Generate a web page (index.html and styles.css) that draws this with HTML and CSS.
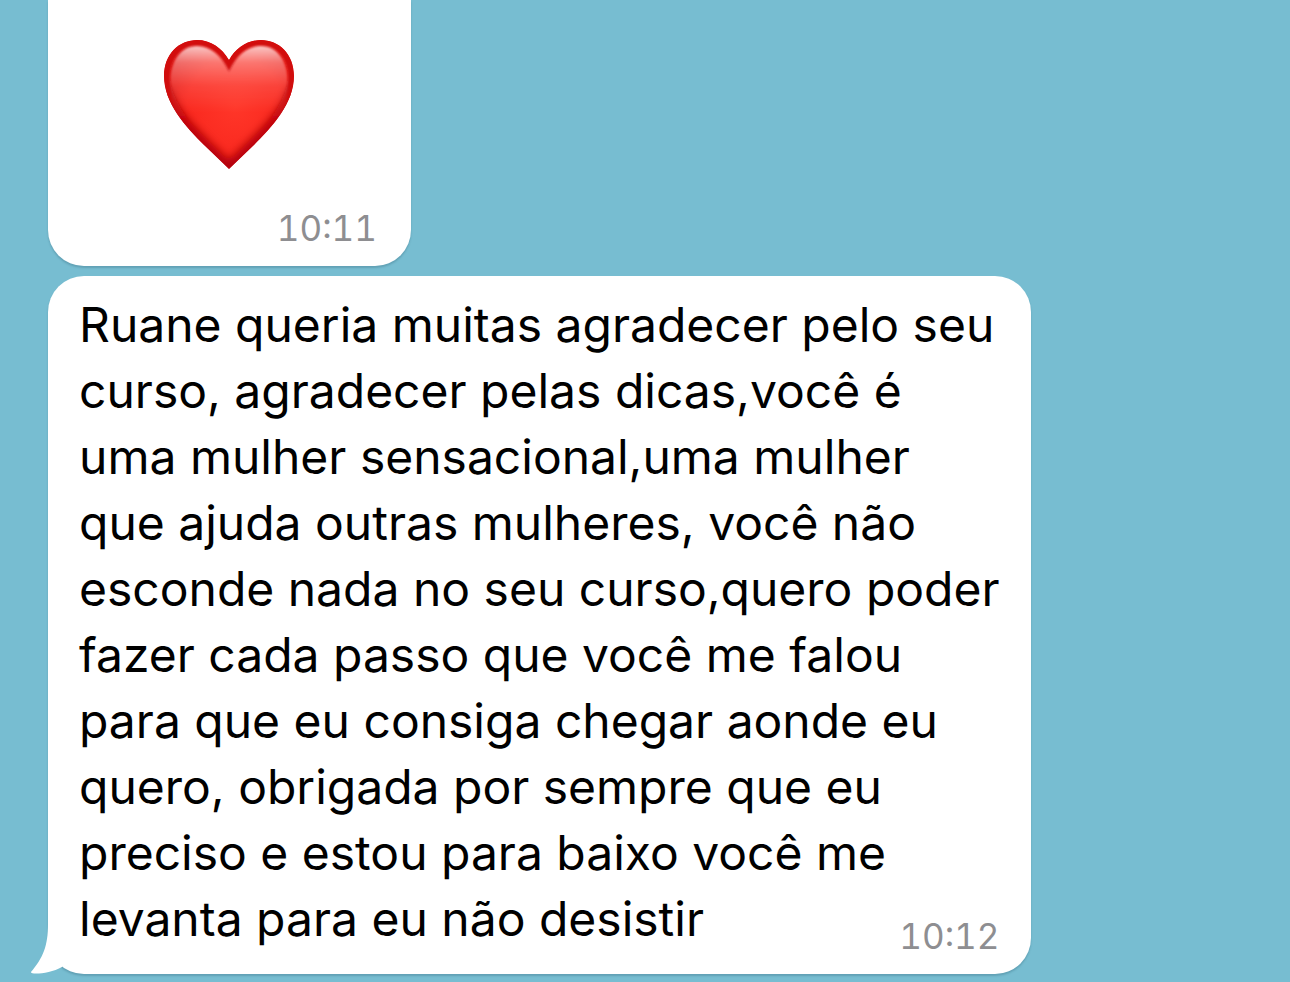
FILE: index.html
```
<!DOCTYPE html>
<html lang="pt-BR">
<head>
  <meta charset="UTF-8">
  <meta name="viewport" content="width=device-width, initial-scale=1.0">
  <title>Chat</title>
  <link rel="stylesheet" href="styles.css">
</head>
<body>
  <main class="chat">
    <article class="message message-emoji">
      <svg class="heart" viewBox="0 0 130 130" role="img" aria-label="Coração vermelho">
        <defs>
          <path id="heart-shape" d="M65 129L40 105C22 87 0 63 0 36C0 14 15 0 33 0C47 0 58 8 65 20C72 8 83 0 97 0C115 0 130 14 130 36C130 63 108 87 90 105Z"/>
          <clipPath id="heart-clip">
            <use href="#heart-shape"/>
          </clipPath>
          <radialGradient id="heart-fill" cx="55%" cy="52%" r="62%">
            <stop offset="0" stop-color="#ff3629"/>
            <stop offset="0.6" stop-color="#fa291f"/>
            <stop offset="1" stop-color="#e01512"/>
          </radialGradient>
          <linearGradient id="heart-shine" gradientUnits="userSpaceOnUse" x1="0" y1="6" x2="0" y2="72">
            <stop offset="0" stop-color="#fff" stop-opacity="0.75"/>
            <stop offset="0.25" stop-color="#fff" stop-opacity="0.36"/>
            <stop offset="0.6" stop-color="#fff" stop-opacity="0.12"/>
            <stop offset="1" stop-color="#fff" stop-opacity="0"/>
          </linearGradient>
          <linearGradient id="heart-rim" gradientUnits="userSpaceOnUse" x1="0" y1="0" x2="0" y2="130">
            <stop offset="0" stop-color="#d30f10"/>
            <stop offset="0.45" stop-color="#cf0d0e"/>
            <stop offset="0.65" stop-color="#cf0d0e" stop-opacity="0.3"/>
            <stop offset="1" stop-color="#cf0d0e" stop-opacity="0"/>
          </linearGradient>
          <filter id="soft-edge" x="-20%" y="-20%" width="140%" height="140%">
            <feGaussianBlur stdDeviation="4"/>
          </filter>
          <filter id="soft-shine">
            <feGaussianBlur stdDeviation="1"/>
          </filter>
        </defs>
        <g clip-path="url(#heart-clip)">
          <use href="#heart-shape" fill="url(#heart-fill)"/>
          <path d="M0 50C6 72 22 87 40 105L65 129L90 105C108 87 124 72 130 50" fill="none" stroke="#b00507" stroke-width="13" filter="url(#soft-edge)"/>
          <use href="#heart-shape" fill="none" stroke="url(#heart-rim)" stroke-width="12" filter="url(#soft-shine)"/>
          <path d="M12 72C-1 38 9 6 33 6C46 6 57 15 65 31C73 15 84 6 97 6C121 6 131 38 118 72Z" fill="url(#heart-shine)" filter="url(#soft-shine)"/>
        </g>
      </svg>
      <time class="time">10:11</time>
    </article>

    <article class="message message-text">
      <p class="text">Ruane queria muitas agradecer pelo seu<br>
        curso, agradecer pelas dicas,você é<br>
        uma mulher sensacional,uma mulher<br>
        que ajuda outras mulheres, você não<br>
        esconde nada no seu curso,quero poder<br>
        fazer cada passo que você me falou<br>
        para que eu consiga chegar aonde eu<br>
        quero, obrigada por sempre que eu<br>
        preciso e estou para baixo você me<br>
        levanta para eu não desistir</p>
      <time class="time">10:12</time>
      <svg class="tail" viewBox="0 0 48 50" aria-hidden="true">
        <path d="M18 0C18 22 13 34 1 48C0 51 20 50 32 43L48 20V0Z" fill="#fff"/>
      </svg>
    </article>
  </main>
</body>
</html>
```
FILE: styles.css
```
* {
  box-sizing: border-box;
}
body {
  margin: 0;
  min-height: 100vh;
  background-color: #77bdd1;
  font-family: Inter, "Liberation Sans", sans-serif;
}
.chat {
  display: flex;
  flex-direction: column;
  align-items: flex-start;
  gap: 10px;
  padding: 0 48px 8px;
}
.message {
  position: relative;
  display: flex;
  flex-direction: column;
  background-color: #fff;
  border-radius: 36px;
  box-shadow: 0 2px 2px rgba(30, 80, 100, 0.25);
}
.message-emoji {
  padding: 40px 34px 18px 116px;
  border-radius: 0 0 36px 36px;
}
.heart {
  width: 130px;
  height: 130px;
  margin-bottom: 38px;
  margin-right: 83px;
}
.message-text {
  padding: 16px 31px 18px;
}
.text {
  margin: 0;
  font-size: 48px;
  line-height: 66px;
  color: #000;
  white-space: nowrap;
}
.time {
  align-self: flex-end;
  font-size: 35px;
  line-height: 40px;
  font-variant-numeric: tabular-nums;
  color: #8e8e91;
}
.message-text .time {
  margin-top: -36px;
}
.tail {
  position: absolute;
  left: -18px;
  bottom: 0;
  width: 48px;
  height: 50px;
}
```
